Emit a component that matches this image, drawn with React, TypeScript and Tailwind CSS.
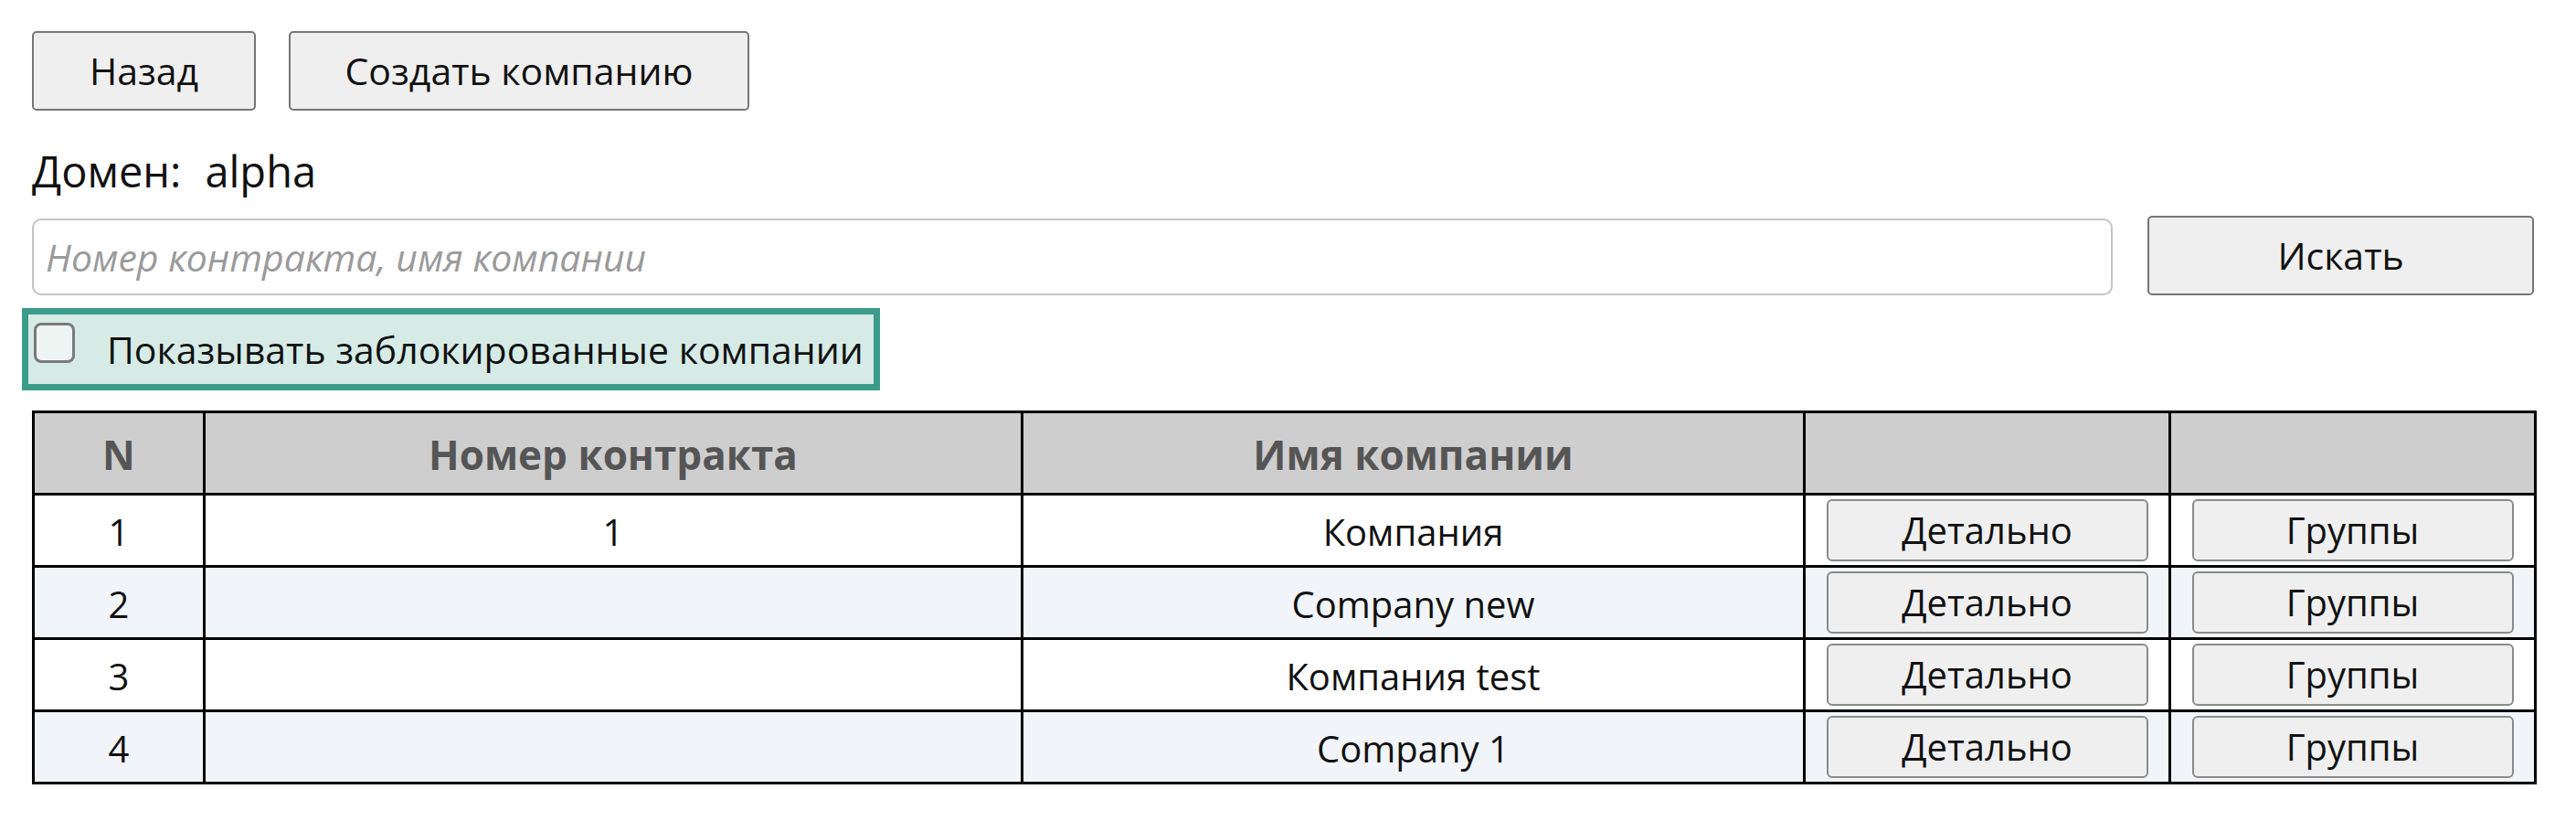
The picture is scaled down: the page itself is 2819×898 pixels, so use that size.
import React from "react";

const rows = [
  { n: "1", contract: "1", name: "Компания" },
  { n: "2", contract: "", name: "Company new" },
  { n: "3", contract: "", name: "Компания test" },
  { n: "4", contract: "", name: "Company 1" },
];

export default function App() {
  return (
    <div className="min-h-screen bg-white pl-[35px] pt-[34px] font-['Open_Sans',sans-serif] text-[#111]">
      <div className="w-[2738px]">
        <div className="flex gap-[36px]">
          <button className="h-[87px] w-[245px] rounded-[5px] border-2 border-[#767676] bg-[#efefef] text-[41px] leading-none text-[#111]">
            Назад
          </button>
          <button className="h-[87px] w-[504px] rounded-[5px] border-2 border-[#767676] bg-[#efefef] text-[41px] leading-none text-[#111]">
            Создать компанию
          </button>
        </div>

        <div className="mt-[34px] flex gap-[26px] text-[47px] leading-[1.362]">
          <span>Домен:</span>
          <span>alpha</span>
        </div>

        <div className="mt-[17px] flex items-end gap-[38px]">
          <input
            className="h-[84px] flex-1 rounded-[10px] border-2 border-[#c4c4c4] bg-white pl-[13px] text-[41px] italic outline-none placeholder:text-[#9a9a9a]"
            placeholder="Номер контракта, имя компании"
          />
          <button className="h-[87px] w-[423px] rounded-[5px] border-2 border-[#767676] bg-[#efefef] text-[41px] leading-none text-[#111]">
            Искать
          </button>
        </div>

        <div className="-ml-[11px] mt-[14px] flex h-[90px] w-[939px] items-start border-[7px] border-[#3b9c8a] bg-[#d6ebe6]">
          <div className="ml-[6px] mt-[9px] h-[44px] w-[45px] shrink-0 rounded-[8px] border-[3px] border-[#7a7a7a] bg-[#eef4f2]" />
          <span className="ml-[35px] mt-[11px] text-[41px] leading-[1.362]">
            Показывать заблокированные компании
          </span>
        </div>

        <table className="mt-[22px] w-[2738px] table-fixed border-collapse border-[3px] border-black text-center text-[40px]">
          <colgroup>
            <col className="w-[187px]" />
            <col className="w-[895px]" />
            <col className="w-[856px]" />
            <col className="w-[400px]" />
            <col className="w-[400px]" />
          </colgroup>
          <thead>
            <tr className="h-[90px] bg-[#cecece] text-[44px] font-semibold text-[#555]">
              <th className="border-[3px] border-black pt-[2px]">N</th>
              <th className="border-[3px] border-black pt-[2px]">Номер контракта</th>
              <th className="border-[3px] border-black pt-[2px]">Имя компании</th>
              <th className="border-[3px] border-black"></th>
              <th className="border-[3px] border-black"></th>
            </tr>
          </thead>
          <tbody>
            {rows.map((r, i) => (
              <tr key={r.n} className={i % 2 === 1 ? "h-[79px] bg-[#f1f5fa]" : "h-[79px] bg-white"}>
                <td className="border-[3px] border-black p-0 pt-[4px]">{r.n}</td>
                <td className="border-[3px] border-black p-0 pt-[4px]">{r.contract}</td>
                <td className="border-[3px] border-black p-0 pt-[4px]">{r.name}</td>
                <td className="border-[3px] border-black p-0">
                  <button className="mx-auto block h-[68px] w-[352px] rounded-[6px] border-2 border-[#8a8a8a] bg-[#efefef] text-[40px] leading-none text-[#111]">
                    Детально
                  </button>
                </td>
                <td className="border-[3px] border-black p-0">
                  <button className="mx-auto block h-[68px] w-[352px] rounded-[6px] border-2 border-[#8a8a8a] bg-[#efefef] text-[40px] leading-none text-[#111]">
                    Группы
                  </button>
                </td>
              </tr>
            ))}
          </tbody>
        </table>
      </div>
    </div>
  );
}
